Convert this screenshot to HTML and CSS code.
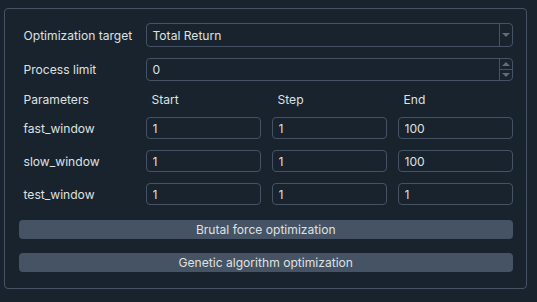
FILE: index.html
```html
<!DOCTYPE html>
<html lang="en">
<head>
    <meta charset="UTF-8">
    <title>Optimization settings</title>
    <link rel="stylesheet" href="styles.css">
</head>
<body>
    <div class="group">
        <div class="form">
            <label class="lbl">Optimization target</label>
            <div class="combo span3">
                <span class="value">Total Return</span>
                <span class="drop"><span class="tri down"></span></span>
            </div>

            <label class="lbl">Process limit</label>
            <div class="spin span3">
                <span class="value">0</span>
                <span class="arrows">
                    <span class="arrow"><span class="tri up"></span></span>
                    <span class="arrow"><span class="tri down"></span></span>
                </span>
            </div>

            <span class="lbl head">Parameters</span>
            <span class="col-head">Start</span>
            <span class="col-head">Step</span>
            <span class="col-head">End</span>

            <span class="lbl">fast_window</span>
            <input class="field" type="text" value="1">
            <input class="field" type="text" value="1">
            <input class="field" type="text" value="100">

            <span class="lbl">slow_window</span>
            <input class="field" type="text" value="1">
            <input class="field" type="text" value="1">
            <input class="field" type="text" value="100">

            <span class="lbl">test_window</span>
            <input class="field" type="text" value="1">
            <input class="field" type="text" value="1">
            <input class="field" type="text" value="1">
        </div>

        <div class="actions">
            <button class="btn">Brutal force optimization</button>
            <button class="btn">Genetic algorithm optimization</button>
        </div>
    </div>
</body>
</html>
```

FILE: styles.css
```css
body {
    margin: 0;
    padding: 8px 10px 15px 3.5px;
    background: #19232d;
    color: #dfe1e2;
    font-family: Inter, "Noto Sans", sans-serif;
    font-size: 12.1px;
}
.group {
    border: 1px solid #455364;
    border-radius: 4px;
    padding: 14px 13px 13px 14px;
    height: 252px;
}
.form {
    display: grid;
    grid-template-columns: 111px 115px 115px 115px;
    grid-template-rows: 24px 23px 14px 22px 22px 22px;
    column-gap: 11px;
    row-gap: 11px;
    padding-left: 5px;
}
.lbl, .col-head {
    display: flex;
    align-items: center;
    white-space: nowrap;
}
.col-head { padding-left: 6px; }
.span3 { grid-column: span 3; }

.combo, .spin, .field {
    box-sizing: border-box;
    border: 1px solid #455364;
    border-radius: 4px;
    background: #19232d;
    color: #dfe1e2;
    font: inherit;
}
.combo, .spin {
    display: flex;
    align-items: stretch;
}
.value {
    flex: 1;
    display: flex;
    align-items: center;
    padding-left: 6px;
}
.drop, .arrows {
    width: 12px;
    border-left: 1px solid #455364;
    display: flex;
    flex-direction: column;
}
.drop { align-items: center; justify-content: center; }
.arrow {
    flex: 1;
    display: flex;
    align-items: center;
    justify-content: center;
}
.arrow + .arrow { border-top: 1px solid #455364; }
.tri {
    width: 0;
    height: 0;
    border-left: 4px solid transparent;
    border-right: 4px solid transparent;
}
.tri.down { border-top: 4px solid #5d6b7e; }
.tri.up { border-bottom: 4px solid #5d6b7e; }

.field {
    height: 22px;
    padding: 0 6px;
    width: 100%;
    outline: none;
}

.actions {
    display: flex;
    flex-direction: column;
    gap: 14px;
    margin-top: 15px;
}
.btn {
    height: 19px;
    border: none;
    border-radius: 4px;
    background: #455364;
    color: #dfe1e2;
    font: inherit;
    padding: 0;
}
```
